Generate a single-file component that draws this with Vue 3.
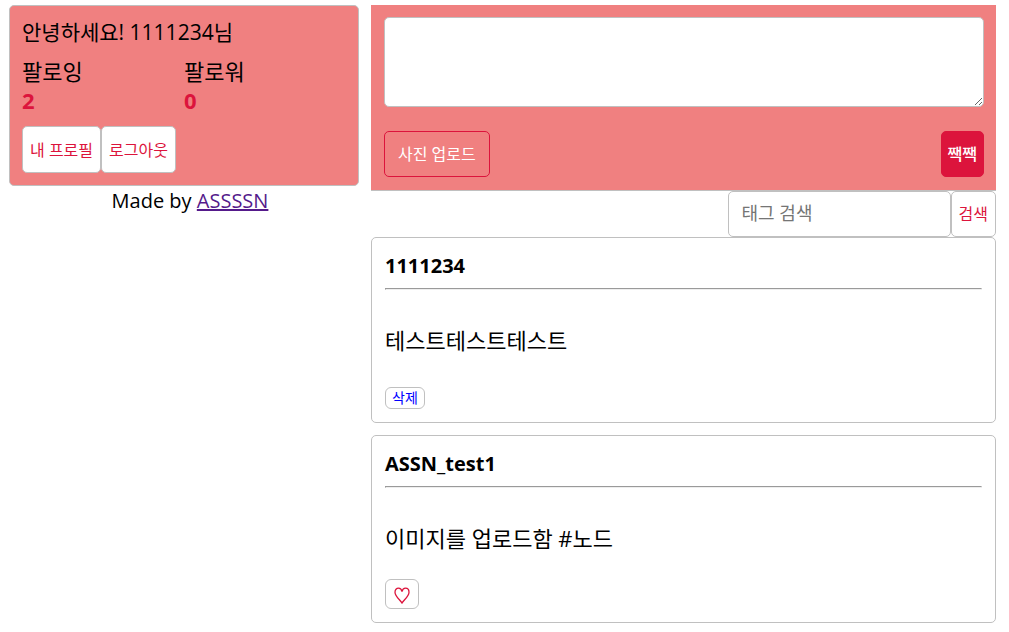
<script setup>
import { ref } from 'vue'

const user = { nick: '1111234', following: 2, follower: 0 }
const content = ref('')
const tag = ref('')
const posts = [
  { id: 1, nick: '1111234', text: '테스트테스트테스트', mine: true },
  { id: 2, nick: 'ASSN_test1', text: '이미지를 업로드함 #노드', mine: false },
]
</script>

<template>
  <div class="page">
    <aside class="side">
      <section class="profile">
        <div class="greeting">안녕하세요! {{ user.nick }}님</div>
        <div class="counts">
          <div>
            <div class="label">팔로잉</div>
            <div class="count">{{ user.following }}</div>
          </div>
          <div>
            <div class="label">팔로워</div>
            <div class="count">{{ user.follower }}</div>
          </div>
        </div>
        <div class="links">
          <a class="btn profile-link" href="#profile">내 프로필</a>
          <a class="btn profile-link" href="#logout">로그아웃</a>
        </div>
      </section>
      <footer class="made">Made by <a href="#author">ASSSSN</a></footer>
    </aside>

    <main class="timeline">
      <form class="composer" @submit.prevent>
        <textarea v-model="content" aria-label="내용" maxlength="140"></textarea>
        <div class="actions">
          <button type="button" class="btn upload">사진 업로드</button>
          <button type="submit" class="btn tweet">짹짹</button>
        </div>
      </form>

      <form class="search" @submit.prevent>
        <input v-model="tag" type="text" aria-label="태그 검색" placeholder="태그 검색" />
        <button type="submit" class="btn find">검색</button>
      </form>

      <div class="posts">
        <article v-for="post in posts" :key="post.id" class="post">
          <div class="author">{{ post.nick }}</div>
          <hr />
          <div class="text">{{ post.text }}</div>
          <div class="tools">
            <button v-if="post.mine" type="button" class="delete">삭제</button>
            <button v-else type="button" class="like" aria-label="좋아요">
              <svg width="16" height="17" viewBox="0 0 16 17" aria-hidden="true">
                <path
                  d="M8 16C6.6 13.2 1 9.6 1 5.2C1 2.8 2.5 1.2 4.5 1.2C6.4 1.2 7.6 2.6 8 4.5C8.4 2.6 9.6 1.2 11.5 1.2C13.5 1.2 15 2.8 15 5.2C15 9.6 9.4 13.2 8 16Z"
                  fill="none"
                  stroke="crimson"
                  stroke-width="1.3"
                />
              </svg>
            </button>
          </div>
        </article>
      </div>
    </main>
  </div>
</template>

<style>
body {
  margin: 0;
  background: #fff;
}
</style>

<style scoped>
.page,
.page * {
  box-sizing: border-box;
}

.page {
  display: grid;
  grid-template-columns: 14fr 25fr;
  gap: 12px;
  align-items: start;
  padding: 5px 13px 9px 9px;
  color: #000;
  font-family: "Open Sans", "Noto Sans", "Noto Sans CJK KR", sans-serif;
  font-size: 20px;
  line-height: 30px;
}

button,
input,
textarea {
  margin: 0;
  font-family: inherit;
}

.profile {
  padding: 11px 12px 12px;
  border: 1px solid silver;
  border-radius: 5px;
  background: lightcoral;
}

.greeting {
  margin-bottom: 10px;
  font-size: 21px;
}

.counts {
  display: grid;
  grid-template-columns: 1fr 1fr;
  margin-bottom: 11px;
}

.label {
  font-size: 22px;
  line-height: 28px;
}

.count {
  color: crimson;
  font-size: 22px;
  font-weight: 700;
  line-height: 30px;
}

.links {
  display: flex;
}

.btn {
  display: flex;
  align-items: center;
  justify-content: center;
  height: 46px;
  padding: 0 7px;
  border: 1px solid silver;
  border-radius: 5px;
  background: #fff;
  color: crimson;
  font-size: 16px;
  line-height: 24px;
  text-decoration: none;
  white-space: nowrap;
}

.profile-link {
  height: 47px;
}

.made {
  padding-left: 12px;
  text-align: center;
}

.made a {
  color: #551a8b;
}

.composer {
  padding: 12px 12px 13px 13px;
  border-bottom: 1px solid silver;
  background: lightcoral;
}

.composer textarea {
  display: block;
  width: 100%;
  height: 90px;
  padding: 8px 12px;
  border: 1px solid silver;
  border-radius: 5px;
  outline: none;
  background: #fff;
  font-size: 18px;
  resize: vertical;
}

.actions {
  display: flex;
  justify-content: space-between;
  margin-top: 24px;
}

.upload {
  padding: 0 13px;
  border-color: crimson;
  background: transparent;
  color: #fff;
}

.tweet {
  padding: 0 6px;
  border-color: crimson;
  background: crimson;
  color: #fff;
  font-weight: 500;
}

.search {
  display: flex;
  justify-content: flex-end;
}

.search input {
  width: 223px;
  height: 46px;
  padding: 0 13px 2px;
  border: 1px solid silver;
  border-radius: 5px;
  outline: none;
  background: #fff;
  font-size: 18px;
}

.search input::placeholder {
  color: #757575;
}

.posts {
  display: grid;
  gap: 12px;
}

.post {
  padding: 13px;
  border: 1px solid silver;
  border-radius: 5px;
}

.author {
  font-weight: 700;
}

.post hr {
  margin: 7px 0 35px;
  border: 1px inset #eee;
}

.text {
  margin-bottom: 26px;
  font-size: 22px;
}

.tools {
  display: flex;
  align-items: flex-end;
  min-height: 28px;
}

.delete,
.like {
  display: flex;
  align-items: center;
  justify-content: center;
  padding: 0 6px;
  border: 1px solid silver;
  border-radius: 6px;
  background: #fff;
}

.delete {
  height: 22px;
  color: blue;
  font-size: 14px;
  line-height: 20px;
}

.like {
  height: 30px;
  padding: 2px 8px 0;
}
</style>
